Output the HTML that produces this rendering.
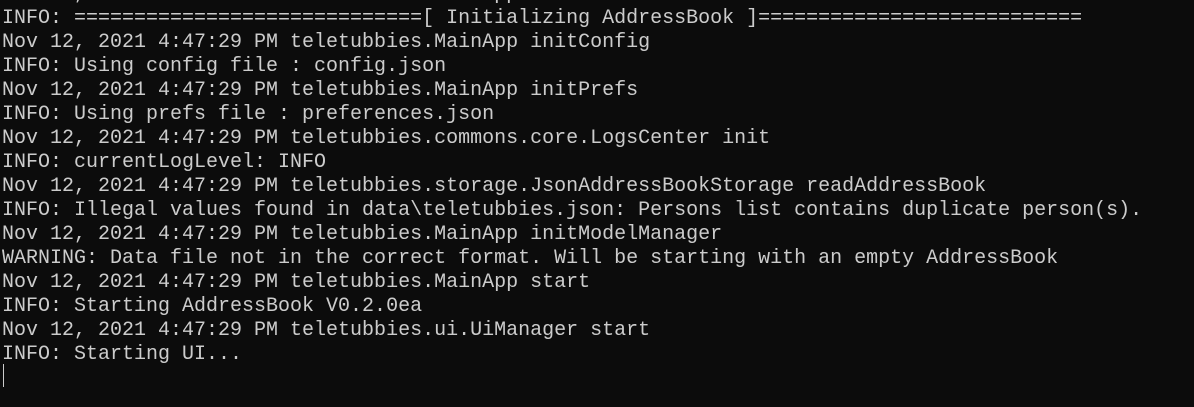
<!DOCTYPE html>
<html><head><style>
html,body{margin:0;padding:0;background:#0c0c0c;width:1194px;height:407px;overflow:hidden}
pre{position:absolute;left:2px;top:-17px;margin:0;font-family:"Liberation Mono",monospace;font-size:20px;line-height:24px;color:#cccccc;white-space:pre}
.cur{position:absolute;left:3px;top:364px;width:1px;height:23px;background:#cccccc}
</style></head><body>
<pre>Nov 12, 2021 4:47:29 PM teletubbies.MainApp start
INFO: =============================[ Initializing AddressBook ]===========================
Nov 12, 2021 4:47:29 PM teletubbies.MainApp initConfig
INFO: Using config file : config.json
Nov 12, 2021 4:47:29 PM teletubbies.MainApp initPrefs
INFO: Using prefs file : preferences.json
Nov 12, 2021 4:47:29 PM teletubbies.commons.core.LogsCenter init
INFO: currentLogLevel: INFO
Nov 12, 2021 4:47:29 PM teletubbies.storage.JsonAddressBookStorage readAddressBook
INFO: Illegal values found in data\teletubbies.json: Persons list contains duplicate person(s).
Nov 12, 2021 4:47:29 PM teletubbies.MainApp initModelManager
WARNING: Data file not in the correct format. Will be starting with an empty AddressBook
Nov 12, 2021 4:47:29 PM teletubbies.MainApp start
INFO: Starting AddressBook V0.2.0ea
Nov 12, 2021 4:47:29 PM teletubbies.ui.UiManager start
INFO: Starting UI...</pre>
<div class="cur"></div>
</body></html>
